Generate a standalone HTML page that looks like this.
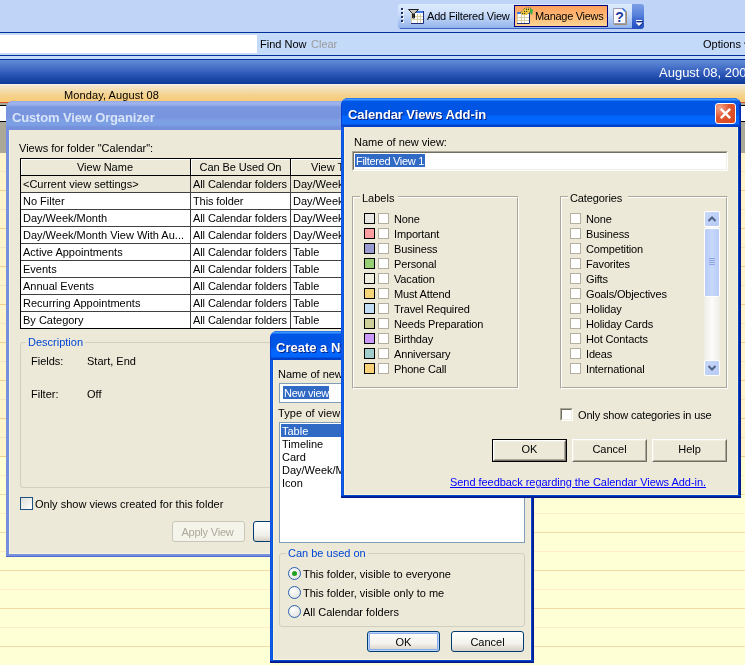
<!DOCTYPE html>
<html><head><meta charset="utf-8">
<style>
*{margin:0;padding:0;box-sizing:border-box}
html,body{width:745px;height:665px;overflow:hidden;background:#C3DAF9;font-family:"Liberation Sans",sans-serif;font-size:11px;color:#000}
.a{position:absolute}
.t{position:absolute;white-space:nowrap;line-height:13px;font-size:11px;will-change:transform}
</style></head><body>
<!-- ===== Outlook background ===== -->
<div class="a" style="left:0;top:0;width:745px;height:32px;background:#C0D4F8"></div>
<div class="a" style="left:0;top:32px;width:745px;height:1px;background:#002D96"></div>
<div class="a" style="left:0;top:35px;width:257px;height:18px;background:#fff"></div>
<div class="t" style="left:260px;top:38px">Find Now</div>
<div class="t" style="left:311px;top:38px;color:#9A9A9A">Clear</div>
<div class="t" style="left:703px;top:38px">Options ▾</div>
<div class="a" style="left:0;top:55px;width:745px;height:1px;background:#002D96"></div>
<div class="a" style="left:0;top:59px;width:745px;height:1px;background:#002D96"></div>
<div class="a" style="left:0;top:60px;width:745px;height:24px;background:linear-gradient(#638DD9,#2B56B7 60%,#0B3997)"></div>
<div class="t" style="left:659px;top:65px;font-size:13px;line-height:15px;color:#fff">August 08, 2005</div>
<div class="a" style="left:0;top:84px;width:745px;height:1px;background:#F4F1EA"></div>
<div class="a" style="left:0;top:85px;width:745px;height:17px;background:linear-gradient(#F1E8D2,#F5D28C 60%,#F8C977)"></div>
<div class="t" style="left:64px;top:89px;letter-spacing:0.1px">Monday, August 08</div>
<div class="a" style="left:0;top:102px;width:745px;height:1px;background:#DB5530"></div>
<div class="a" style="left:0;top:103px;width:745px;height:2px;background:#A9A998"></div>
<div class="a" style="left:0;top:105px;width:745px;height:17px;background:#fff;border-top:1px solid #000;border-bottom:1px solid #000"></div>
<div class="a" style="left:0;top:122px;width:745px;height:31px;background:#ABA897"></div>
<div class="a" id="cal" style="left:0;top:153px;width:745px;height:512px;background:#FFF4CC"></div>
<div class="a" style="left:0;top:457px;width:745px;height:208px;background:#FFFFD5"></div>
<div class="a" style="left:0;top:171px;width:745px;height:1px;background:#EFE5C6"></div>
<div class="a" style="left:0;top:190px;width:745px;height:1px;background:#F1D08E"></div>
<div class="a" style="left:0;top:209px;width:745px;height:1px;background:#EFE5C6"></div>
<div class="a" style="left:0;top:228px;width:745px;height:1px;background:#F1D08E"></div>
<div class="a" style="left:0;top:247px;width:745px;height:1px;background:#EFE5C6"></div>
<div class="a" style="left:0;top:266px;width:745px;height:1px;background:#F1D08E"></div>
<div class="a" style="left:0;top:285px;width:745px;height:1px;background:#EFE5C6"></div>
<div class="a" style="left:0;top:304px;width:745px;height:1px;background:#F1D08E"></div>
<div class="a" style="left:0;top:323px;width:745px;height:1px;background:#EFE5C6"></div>
<div class="a" style="left:0;top:342px;width:745px;height:1px;background:#F1D08E"></div>
<div class="a" style="left:0;top:361px;width:745px;height:1px;background:#EFE5C6"></div>
<div class="a" style="left:0;top:380px;width:745px;height:1px;background:#F1D08E"></div>
<div class="a" style="left:0;top:399px;width:745px;height:1px;background:#EFE5C6"></div>
<div class="a" style="left:0;top:418px;width:745px;height:1px;background:#F1D08E"></div>
<div class="a" style="left:0;top:437px;width:745px;height:1px;background:#EFE5C6"></div>
<div class="a" style="left:0;top:456px;width:745px;height:1px;background:#F1D08E"></div>
<div class="a" style="left:0;top:475px;width:745px;height:1px;background:#FFEDC5"></div>
<div class="a" style="left:0;top:494px;width:745px;height:1px;background:#F3DBA5"></div>
<div class="a" style="left:0;top:513px;width:745px;height:1px;background:#FFEDC5"></div>
<div class="a" style="left:0;top:532px;width:745px;height:1px;background:#F3DBA5"></div>
<div class="a" style="left:0;top:551px;width:745px;height:1px;background:#FFEDC5"></div>
<div class="a" style="left:0;top:570px;width:745px;height:1px;background:#F3DBA5"></div>
<div class="a" style="left:0;top:589px;width:745px;height:1px;background:#FFEDC5"></div>
<div class="a" style="left:0;top:608px;width:745px;height:1px;background:#F3DBA5"></div>
<div class="a" style="left:0;top:627px;width:745px;height:1px;background:#FFEDC5"></div>
<div class="a" style="left:0;top:646px;width:745px;height:1px;background:#F3DBA5"></div>

<!-- toolbar -->
<div class="a" style="left:398px;top:4px;width:240px;height:25px;border-radius:3px 0 0 3px;background:linear-gradient(#DDEBFD 0px,#D3E4FC 6px,#C2D7F8 12px,#AEC8F2 17px,#9BBAEE 22px,#8FB0EA 24px)"></div>
<div class="a" style="left:400px;top:28px;width:238px;height:1px;background:#3B64C0"></div>
<div class="a" style="left:402px;top:9px;width:2px;height:2px;background:#fff"></div>
<div class="a" style="left:401px;top:8px;width:2px;height:2px;background:#1B2C66"></div>
<div class="a" style="left:402px;top:13px;width:2px;height:2px;background:#fff"></div>
<div class="a" style="left:401px;top:12px;width:2px;height:2px;background:#1B2C66"></div>
<div class="a" style="left:402px;top:17px;width:2px;height:2px;background:#fff"></div>
<div class="a" style="left:401px;top:16px;width:2px;height:2px;background:#1B2C66"></div>
<div class="a" style="left:402px;top:21px;width:2px;height:2px;background:#fff"></div>
<div class="a" style="left:401px;top:20px;width:2px;height:2px;background:#1B2C66"></div>
<svg class="a" style="left:406px;top:6px" width="20" height="20">
<rect x="5" y="5" width="13" height="12" fill="#FFFFFF"/>
<path d="M11.5 8V17M14.5 8V17M5 10.5H17M5 13.5H17" stroke="#D8CFA8" stroke-width="1"/>
<path d="M5.5 5V17" stroke="#D8CFA8" stroke-width="1"/>
<rect x="9" y="5" width="9" height="2" fill="#3C78E8"/>
<path d="M17.5 5V17.5H5" stroke="#1F2A78" stroke-width="1" fill="none"/>
<path d="M2.5 3.5 L12.5 3.5 L8.5 7.5 L8.5 12 L6.5 12 L6.5 7.5 Z" fill="#C8C8C0" stroke="#202020" stroke-width="1"/>
<path d="M7.5 7.5V11.5" stroke="#303030" stroke-width="1.2"/>
</svg>
<div class="t" style="left:427px;top:10px;letter-spacing:-0.2px">Add Filtered View</div>
<div class="a" style="left:514px;top:5px;width:94px;height:22px;border:1px solid #000080;background:linear-gradient(#FFA15D,#FFB874 50%,#FFD592)"></div>
<svg class="a" style="left:515px;top:6px" width="20" height="20">
<rect x="2" y="6" width="13" height="12" fill="#FFFFFF"/>
<path d="M6.5 8V17M9.5 8V17M2 11.5H14M2 14.5H14M2.5 6V17" stroke="#D8CFA8" stroke-width="1"/>
<rect x="2" y="6" width="13" height="2" fill="#3C78E8"/>
<path d="M14.5 6V17.5H2" stroke="#1F2A78" stroke-width="1" fill="none"/>
<path d="M5 7 L10 2 L16 2 L16 5 L12 9 L8 9 Z" fill="#E8C040"/>
<path d="M5 7 L10 2 L16 2" stroke="#505040" stroke-width="1" stroke-dasharray="1 1" fill="none"/>
<path d="M7 7.5H10M9 5.5H12M11 3.5H14" stroke="#404030" stroke-width="1" stroke-dasharray="1 1"/>
<path d="M15 2 L18 4 L17 9 L15 7 Z" fill="#3CB043"/>
</svg>
<div class="t" style="left:535px;top:10px;letter-spacing:-0.3px">Manage Views</div>
<svg class="a" style="left:612px;top:7px" width="16" height="19">
<path d="M1.5 1.5 H11 L13.5 4 V16.5 H1.5 Z" fill="#FAFAFF" stroke="#9C9CB0" stroke-width="1"/>
<path d="M2 17.5H14.5V4.5" stroke="#A08C70" stroke-width="1" fill="none"/>
<path d="M10.5 1.5 L13.5 4.5" stroke="#3070E0" stroke-width="1.5"/>
<text x="7.5" y="14.5" font-family="Liberation Sans" font-weight="bold" font-size="14" fill="#1C3A9C" text-anchor="middle">?</text>
</svg>
<div class="a" style="left:632px;top:4px;width:12px;height:25px;border-radius:0 3px 3px 0;background:linear-gradient(#7C9FE6,#5A84DC 40%,#2D5ACA 80%,#2450C0)"></div>
<div class="a" style="left:636px;top:20px;width:6px;height:1px;background:#fff"></div>
<div class="a" style="left:637px;top:21px;width:6px;height:1px;background:#1A2A70"></div>
<svg class="a" style="left:635px;top:22px" width="9" height="5"><path d="M0.5 0.5 L7.5 0.5 L4 4 Z" fill="#fff"/><path d="M4.5 4.5 L8 1" stroke="#1A2A70" stroke-width="1"/></svg>

<!-- ===== Dialog 1: Custom View Organizer ===== -->
<div class="a" style="left:6px;top:101px;width:514px;height:456px;background:#7590DC;border-radius:7px 7px 0 0"></div>
<div class="a" style="left:6px;top:101px;width:514px;height:29px;border-radius:7px 7px 0 0;background:linear-gradient(#8EA7E6 0px,#A0B6EC 2px,#95ACE8 4px,#7A96DF 6px,#7994DE 17px,#7DA0E5 19px,#7CA0E4 24px,#7790DC 26px,#7590DC 29px)"></div>
<div class="a" style="left:9px;top:130px;width:508px;height:424px;background:#ECE9D8;border-left:1px solid #F8F3E0;border-bottom:1px solid #F8F3E0"></div>
<div class="a" style="left:6px;top:556px;width:514px;height:1px;background:#5468CF"></div>
<div class="t" style="left:12px;top:110px;font-size:13px;line-height:15px;font-weight:bold;color:#D8E4F8;letter-spacing:-0.15px">Custom View Organizer</div>
<div class="t" style="left:19px;top:142px">Views for folder "Calendar":</div>
<div class="a" style="left:20px;top:158px;width:400px;height:171px;background:#fff;border:1px solid #000"></div>
<div class="a" style="left:21px;top:159px;width:398px;height:16px;background:#ECE9D8;border-top:1px solid #fff;border-left:1px solid #fff"></div>
<div class="a" style="left:20px;top:175px;width:400px;height:1px;background:#000"></div>
<div class="a" style="left:21px;top:176px;width:398px;height:16px;background:#ECE9D8"></div>
<div class="a" style="left:21px;top:192px;width:398px;height:1px;background:#404040"></div>
<div class="a" style="left:21px;top:209px;width:398px;height:1px;background:#404040"></div>
<div class="a" style="left:21px;top:226px;width:398px;height:1px;background:#404040"></div>
<div class="a" style="left:21px;top:243px;width:398px;height:1px;background:#404040"></div>
<div class="a" style="left:21px;top:260px;width:398px;height:1px;background:#404040"></div>
<div class="a" style="left:21px;top:277px;width:398px;height:1px;background:#404040"></div>
<div class="a" style="left:21px;top:294px;width:398px;height:1px;background:#404040"></div>
<div class="a" style="left:21px;top:311px;width:398px;height:1px;background:#404040"></div>
<div class="a" style="left:190px;top:159px;width:1px;height:17px;background:#000"></div>
<div class="a" style="left:191px;top:159px;width:1px;height:16px;background:#fff"></div>
<div class="a" style="left:290px;top:159px;width:1px;height:17px;background:#000"></div>
<div class="a" style="left:291px;top:159px;width:1px;height:16px;background:#fff"></div>
<div class="a" style="left:190px;top:176px;width:1px;height:152px;background:#404040"></div>
<div class="a" style="left:290px;top:176px;width:1px;height:152px;background:#404040"></div>
<div class="t" style="left:20px;top:161px;width:170px;text-align:center">View Name</div>
<div class="t" style="left:191px;top:161px;width:99px;text-align:center;letter-spacing:-0.1px">Can Be Used On</div>
<div class="t" style="left:311px;top:161px">View Type</div>
<div class="t" style="left:23px;top:178px;width:167px;overflow:hidden">&lt;Current view settings&gt;</div>
<div class="t" style="left:193px;top:178px;width:96px;overflow:hidden;letter-spacing:-0.1px">All Calendar folders</div>
<div class="t" style="left:293px;top:178px">Day/Week/Month</div>
<div class="t" style="left:23px;top:195px;width:167px;overflow:hidden">No Filter</div>
<div class="t" style="left:193px;top:195px;width:96px;overflow:hidden;letter-spacing:-0.1px">This folder</div>
<div class="t" style="left:293px;top:195px">Day/Week/Month</div>
<div class="t" style="left:23px;top:212px;width:167px;overflow:hidden">Day/Week/Month</div>
<div class="t" style="left:193px;top:212px;width:96px;overflow:hidden;letter-spacing:-0.1px">All Calendar folders</div>
<div class="t" style="left:293px;top:212px">Day/Week/Month</div>
<div class="t" style="left:23px;top:229px;width:167px;overflow:hidden">Day/Week/Month View With Au...</div>
<div class="t" style="left:193px;top:229px;width:96px;overflow:hidden;letter-spacing:-0.1px">All Calendar folders</div>
<div class="t" style="left:293px;top:229px">Day/Week/Month</div>
<div class="t" style="left:23px;top:246px;width:167px;overflow:hidden">Active Appointments</div>
<div class="t" style="left:193px;top:246px;width:96px;overflow:hidden;letter-spacing:-0.1px">All Calendar folders</div>
<div class="t" style="left:293px;top:246px">Table</div>
<div class="t" style="left:23px;top:263px;width:167px;overflow:hidden">Events</div>
<div class="t" style="left:193px;top:263px;width:96px;overflow:hidden;letter-spacing:-0.1px">All Calendar folders</div>
<div class="t" style="left:293px;top:263px">Table</div>
<div class="t" style="left:23px;top:280px;width:167px;overflow:hidden">Annual Events</div>
<div class="t" style="left:193px;top:280px;width:96px;overflow:hidden;letter-spacing:-0.1px">All Calendar folders</div>
<div class="t" style="left:293px;top:280px">Table</div>
<div class="t" style="left:23px;top:297px;width:167px;overflow:hidden">Recurring Appointments</div>
<div class="t" style="left:193px;top:297px;width:96px;overflow:hidden;letter-spacing:-0.1px">All Calendar folders</div>
<div class="t" style="left:293px;top:297px">Table</div>
<div class="t" style="left:23px;top:314px;width:167px;overflow:hidden">By Category</div>
<div class="t" style="left:193px;top:314px;width:96px;overflow:hidden;letter-spacing:-0.1px">All Calendar folders</div>
<div class="t" style="left:293px;top:314px">Table</div>
<div class="a" style="left:20px;top:342px;width:480px;height:146px;border:1px solid #D0D0BF;border-radius:3px"></div>
<div class="t" style="left:26px;top:336px;padding:0 2px;background:#ECE9D8;color:#0046D5">Description</div>
<div class="t" style="left:31px;top:355px">Fields:</div>
<div class="t" style="left:87px;top:355px">Start, End</div>
<div class="t" style="left:31px;top:388px">Filter:</div>
<div class="t" style="left:87px;top:388px">Off</div>
<div class="a" style="left:20px;top:497px;width:13px;height:13px;border:1px solid #1C5180;background:linear-gradient(135deg,#DCDCD7,#FFFFFF)"></div>
<div class="t" style="left:35px;top:498px">Only show views created for this folder</div>
<div class="a" style="left:172px;top:521px;width:73px;height:21px;border:1px solid #C9C7BA;border-radius:3px;background:#F5F4EA"></div>
<div class="t" style="left:171px;top:526px;width:73px;text-align:center;color:#ACA899;letter-spacing:-0.2px">Apply View</div>
<div class="a" style="left:253px;top:521px;width:73px;height:21px;border:1px solid #003C74;border-radius:3px;background:linear-gradient(#FFFFFF,#F0F0EA 70%,#D6D0C5)"></div>

<!-- ===== Dialog 2: Create a New View ===== -->
<div class="a" style="left:270px;top:331px;width:264px;height:332px;background:linear-gradient(90deg,#0831D9 0px,#166AEE 1px,#0855DD 2px,#0855DD 261px,#0033B8 262px,#001B8E 263px);border-radius:7px 7px 0 0"></div>
<div class="a" style="left:270px;top:660px;width:264px;height:3px;background:linear-gradient(#0A5CF0 0px,#0033B0 1px,#001B8E 2px)"></div>
<div class="a" style="left:270px;top:331px;width:264px;height:29px;border-radius:7px 7px 0 0;background:linear-gradient(#0A5BE8 0px,#3D95FF 1px,#3D95FF 2px,#0058E6 3px,#0055E5 5px,#0055E5 17px,#0066FF 18px,#0066FF 26px,#0040C8 27px,#0040C8 29px)"></div>
<div class="a" style="left:270px;top:337px;width:1px;height:23px;background:#0A40D0"></div>
<div class="a" style="left:532px;top:337px;width:2px;height:23px;background:linear-gradient(90deg,#0840C8,#0028A8)"></div>
<div class="a" style="left:273px;top:360px;width:258px;height:300px;background:#ECE9D8;border:1px solid #FDF4D6;border-top:none"></div>
<div class="t" style="left:276px;top:340px;font-size:13px;line-height:15px;font-weight:bold;color:#fff;text-shadow:1px 1px 0 #0A1E78">Create a New View</div>
<div class="t" style="left:278px;top:368px">Name of new view:</div>
<div class="a" style="left:279px;top:383px;width:246px;height:20px;border:1px solid #7F9DB9;background:#fff"></div>
<div class="t" style="left:283px;top:386px;height:13px;padding:1px 0 0 1px;line-height:13px;background:#316AC5;color:#fff;letter-spacing:-0.25px;width:46px;overflow:hidden">New view</div>
<div class="t" style="left:278px;top:407px;letter-spacing:0.1px">Type of view:</div>
<div class="a" style="left:279px;top:422px;width:246px;height:121px;border:1px solid #7F9DB9;background:#fff"></div>
<div class="a" style="left:281px;top:424px;width:242px;height:13px;background:#316AC5"></div>
<div class="t" style="left:282px;top:425px;color:#fff">Table</div>
<div class="t" style="left:282px;top:438px;color:#000">Timeline</div>
<div class="t" style="left:282px;top:451px;color:#000">Card</div>
<div class="t" style="left:282px;top:464px;color:#000">Day/Week/Month</div>
<div class="t" style="left:282px;top:477px;color:#000">Icon</div>
<div class="a" style="left:279px;top:553px;width:246px;height:74px;border:1px solid #D0D0BF;border-radius:3px"></div>
<div class="t" style="left:286px;top:547px;padding:0 2px;background:#ECE9D8;color:#0046D5">Can be used on</div>
<div class="a" style="left:288px;top:567px;width:13px;height:13px;border-radius:50%;border:1px solid #2A62B0;background:radial-gradient(circle at 35% 35%,#fff,#DCDCD7)"></div>
<div class="a" style="left:292px;top:571px;width:5px;height:5px;border-radius:50%;background:#21A121"></div>
<div class="t" style="left:303px;top:568px">This folder, visible to everyone</div>
<div class="a" style="left:288px;top:586px;width:13px;height:13px;border-radius:50%;border:1px solid #2A62B0;background:radial-gradient(circle at 35% 35%,#fff,#DCDCD7)"></div>
<div class="t" style="left:303px;top:587px">This folder, visible only to me</div>
<div class="a" style="left:288px;top:605px;width:13px;height:13px;border-radius:50%;border:1px solid #2A62B0;background:radial-gradient(circle at 35% 35%,#fff,#DCDCD7)"></div>
<div class="t" style="left:303px;top:606px">All Calendar folders</div>
<div class="a" style="left:367px;top:631px;width:73px;height:21px;border:1px solid #003C74;border-radius:3px;background:linear-gradient(#FFFFFF,#F3F2EC 60%,#D6D0C5);box-shadow:inset 0 0 0 1px #B8D4FA,inset 0 0 0 2px #8AAEEC"></div>
<div class="t" style="left:367px;top:636px;width:73px;text-align:center">OK</div>
<div class="a" style="left:451px;top:631px;width:73px;height:21px;border:1px solid #003C74;border-radius:3px;background:linear-gradient(#FFFFFF,#F3F2EC 60%,#D6D0C5);"></div>
<div class="t" style="left:451px;top:636px;width:73px;text-align:center">Cancel</div>

<!-- ===== Dialog 3: Calendar Views Add-in ===== -->
<div class="a" style="left:341px;top:98px;width:400px;height:400px;background:linear-gradient(90deg,#0831D9 0px,#166AEE 1px,#0855DD 2px,#0855DD 397px,#0033B8 398px,#001B8E 399px);border-radius:7px 7px 0 0"></div>
<div class="a" style="left:341px;top:495px;width:400px;height:3px;background:linear-gradient(#0A5CF0 0px,#0033B0 1px,#001B8E 2px)"></div>
<div class="a" style="left:341px;top:98px;width:400px;height:29px;border-radius:7px 7px 0 0;background:linear-gradient(#0A5BE8 0px,#3D95FF 1px,#3D95FF 2px,#0058E6 3px,#0055E5 5px,#0055E5 17px,#0066FF 18px,#0066FF 26px,#0040C8 27px,#0040C8 29px)"></div>
<div class="a" style="left:341px;top:104px;width:1px;height:23px;background:#0A40D0"></div>
<div class="a" style="left:739px;top:104px;width:2px;height:23px;background:linear-gradient(90deg,#0840C8,#0028A8)"></div>
<div class="a" style="left:344px;top:127px;width:394px;height:368px;background:#ECE9D8;border:1px solid #FDF4D6;border-top:none"></div>
<div class="t" style="left:348px;top:107px;font-size:13px;line-height:15px;font-weight:bold;color:#fff;text-shadow:1px 1px 0 #0A1E78;letter-spacing:-0.1px">Calendar Views Add-in</div>
<div class="a" style="left:715px;top:103px;width:21px;height:21px;border:1px solid #fff;border-radius:3px;background:radial-gradient(circle at 20% 20%,#F5A58A,#E0552E 45%,#D8461E)"></div>
<svg class="a" style="left:715px;top:103px" width="21" height="21"><path d="M5.8 5.8 L15.2 15.2 M15.2 5.8 L5.8 15.2" stroke="#fff" stroke-width="2.4"/></svg>
<div class="t" style="left:354px;top:136px">Name of new view:</div>
<div class="a" style="left:352px;top:151px;width:376px;height:20px;background:#fff;border-top:1px solid #ACA899;border-left:1px solid #ACA899;border-right:1px solid #fff;border-bottom:1px solid #fff"></div>
<div class="a" style="left:353px;top:152px;width:374px;height:18px;border-top:1px solid #716F64;border-left:1px solid #716F64;border-right:1px solid #F1EFE2;border-bottom:1px solid #F1EFE2"></div>
<div class="t" style="left:355px;top:154px;height:13px;padding:1px 0 0 1px;line-height:13px;background:#316AC5;color:#fff;letter-spacing:-0.3px;width:70px;overflow:hidden">Filtered View 1</div>
<div class="a" style="left:352px;top:196px;width:167px;height:193px;border:1px solid #ACA899;border-right-color:#fff;border-bottom-color:#fff"></div>
<div class="a" style="left:353px;top:197px;width:165px;height:191px;border:1px solid #fff;border-right-color:#ACA899;border-bottom-color:#ACA899"></div>
<div class="t" style="left:360px;top:192px;padding:0 4px 0 2px;background:#ECE9D8">Labels</div>
<div class="a" style="left:560px;top:196px;width:168px;height:193px;border:1px solid #ACA899;border-right-color:#fff;border-bottom-color:#fff"></div>
<div class="a" style="left:561px;top:197px;width:166px;height:191px;border:1px solid #fff;border-right-color:#ACA899;border-bottom-color:#ACA899"></div>
<div class="t" style="left:568px;top:192px;padding:0 6px 0 2px;background:#ECE9D8;letter-spacing:-0.1px">Categories</div>
<div class="a" style="left:364px;top:213px;width:11px;height:11px;border:1px solid #000;background:#EAE8E2"></div>
<div class="a" style="left:378px;top:213px;width:11px;height:11px;border:1px solid #B4AE9E;background:#fff"></div>
<div class="t" style="left:394px;top:213px;letter-spacing:-0.15px">None</div>
<div class="a" style="left:364px;top:228px;width:11px;height:11px;border:1px solid #000;background:#FF9E9E"></div>
<div class="a" style="left:378px;top:228px;width:11px;height:11px;border:1px solid #B4AE9E;background:#fff"></div>
<div class="t" style="left:394px;top:228px;letter-spacing:-0.15px">Important</div>
<div class="a" style="left:364px;top:243px;width:11px;height:11px;border:1px solid #000;background:#9B9BD3"></div>
<div class="a" style="left:378px;top:243px;width:11px;height:11px;border:1px solid #B4AE9E;background:#fff"></div>
<div class="t" style="left:394px;top:243px;letter-spacing:-0.15px">Business</div>
<div class="a" style="left:364px;top:258px;width:11px;height:11px;border:1px solid #000;background:#98CE73"></div>
<div class="a" style="left:378px;top:258px;width:11px;height:11px;border:1px solid #B4AE9E;background:#fff"></div>
<div class="t" style="left:394px;top:258px;letter-spacing:-0.15px">Personal</div>
<div class="a" style="left:364px;top:273px;width:11px;height:11px;border:1px solid #000;background:#F0EEDC"></div>
<div class="a" style="left:378px;top:273px;width:11px;height:11px;border:1px solid #B4AE9E;background:#fff"></div>
<div class="t" style="left:394px;top:273px;letter-spacing:-0.15px">Vacation</div>
<div class="a" style="left:364px;top:288px;width:11px;height:11px;border:1px solid #000;background:#F5D47A"></div>
<div class="a" style="left:378px;top:288px;width:11px;height:11px;border:1px solid #B4AE9E;background:#fff"></div>
<div class="t" style="left:394px;top:288px;letter-spacing:-0.15px">Must Attend</div>
<div class="a" style="left:364px;top:303px;width:11px;height:11px;border:1px solid #000;background:#C2DEF5"></div>
<div class="a" style="left:378px;top:303px;width:11px;height:11px;border:1px solid #B4AE9E;background:#fff"></div>
<div class="t" style="left:394px;top:303px;letter-spacing:-0.15px">Travel Required</div>
<div class="a" style="left:364px;top:318px;width:11px;height:11px;border:1px solid #000;background:#CFCF9C"></div>
<div class="a" style="left:378px;top:318px;width:11px;height:11px;border:1px solid #B4AE9E;background:#fff"></div>
<div class="t" style="left:394px;top:318px;letter-spacing:-0.15px">Needs Preparation</div>
<div class="a" style="left:364px;top:333px;width:11px;height:11px;border:1px solid #000;background:#CC99FF"></div>
<div class="a" style="left:378px;top:333px;width:11px;height:11px;border:1px solid #B4AE9E;background:#fff"></div>
<div class="t" style="left:394px;top:333px;letter-spacing:-0.15px">Birthday</div>
<div class="a" style="left:364px;top:348px;width:11px;height:11px;border:1px solid #000;background:#A3CCCC"></div>
<div class="a" style="left:378px;top:348px;width:11px;height:11px;border:1px solid #B4AE9E;background:#fff"></div>
<div class="t" style="left:394px;top:348px;letter-spacing:-0.15px">Anniversary</div>
<div class="a" style="left:364px;top:363px;width:11px;height:11px;border:1px solid #000;background:#FAD27A"></div>
<div class="a" style="left:378px;top:363px;width:11px;height:11px;border:1px solid #B4AE9E;background:#fff"></div>
<div class="t" style="left:394px;top:363px;letter-spacing:-0.15px">Phone Call</div>
<div class="a" style="left:570px;top:213px;width:11px;height:11px;border:1px solid #B4AE9E;background:#fff"></div>
<div class="t" style="left:586px;top:213px;letter-spacing:-0.15px">None</div>
<div class="a" style="left:570px;top:228px;width:11px;height:11px;border:1px solid #B4AE9E;background:#fff"></div>
<div class="t" style="left:586px;top:228px;letter-spacing:-0.15px">Business</div>
<div class="a" style="left:570px;top:243px;width:11px;height:11px;border:1px solid #B4AE9E;background:#fff"></div>
<div class="t" style="left:586px;top:243px;letter-spacing:-0.15px">Competition</div>
<div class="a" style="left:570px;top:258px;width:11px;height:11px;border:1px solid #B4AE9E;background:#fff"></div>
<div class="t" style="left:586px;top:258px;letter-spacing:-0.15px">Favorites</div>
<div class="a" style="left:570px;top:273px;width:11px;height:11px;border:1px solid #B4AE9E;background:#fff"></div>
<div class="t" style="left:586px;top:273px;letter-spacing:-0.15px">Gifts</div>
<div class="a" style="left:570px;top:288px;width:11px;height:11px;border:1px solid #B4AE9E;background:#fff"></div>
<div class="t" style="left:586px;top:288px;letter-spacing:-0.15px">Goals/Objectives</div>
<div class="a" style="left:570px;top:303px;width:11px;height:11px;border:1px solid #B4AE9E;background:#fff"></div>
<div class="t" style="left:586px;top:303px;letter-spacing:-0.15px">Holiday</div>
<div class="a" style="left:570px;top:318px;width:11px;height:11px;border:1px solid #B4AE9E;background:#fff"></div>
<div class="t" style="left:586px;top:318px;letter-spacing:-0.15px">Holiday Cards</div>
<div class="a" style="left:570px;top:333px;width:11px;height:11px;border:1px solid #B4AE9E;background:#fff"></div>
<div class="t" style="left:586px;top:333px;letter-spacing:-0.15px">Hot Contacts</div>
<div class="a" style="left:570px;top:348px;width:11px;height:11px;border:1px solid #B4AE9E;background:#fff"></div>
<div class="t" style="left:586px;top:348px;letter-spacing:-0.15px">Ideas</div>
<div class="a" style="left:570px;top:363px;width:11px;height:11px;border:1px solid #B4AE9E;background:#fff"></div>
<div class="t" style="left:586px;top:363px;letter-spacing:-0.15px">International</div>
<div class="a" style="left:704px;top:211px;width:16px;height:165px;background:linear-gradient(90deg,#EEEDE5,#FDFDFA 50%,#EEEDE5)"></div>
<div class="a" style="left:704px;top:211px;width:16px;height:16px;border:1px solid #fff;border-radius:2px;background:linear-gradient(135deg,#C8D8FA,#B6CAF6)"></div>
<svg class="a" style="left:704px;top:211px" width="16" height="16"><path d="M4.5 10 L8 6.5 L11.5 10" stroke="#4D6185" stroke-width="2" fill="none"/></svg>
<div class="a" style="left:704px;top:228px;width:16px;height:69px;border:1px solid #fff;border-radius:2px;background:linear-gradient(90deg,#B8CCF7,#C8D8FB 50%,#B8CCF7)"></div>
<svg class="a" style="left:704px;top:228px" width="16" height="69"><path d="M5 30.5H11M5 32.5H11M5 34.5H11M5 36.5H11" stroke="#8CA6E0" stroke-width="1"/></svg>
<div class="a" style="left:704px;top:360px;width:16px;height:16px;border:1px solid #fff;border-radius:2px;background:linear-gradient(135deg,#C8D8FA,#B6CAF6)"></div>
<svg class="a" style="left:704px;top:360px" width="16" height="16"><path d="M4.5 6 L8 9.5 L11.5 6" stroke="#4D6185" stroke-width="2" fill="none"/></svg>
<div class="a" style="left:560px;top:408px;width:13px;height:13px;background:#fff;border-top:1px solid #ACA899;border-left:1px solid #ACA899;border-right:1px solid #fff;border-bottom:1px solid #fff"></div>
<div class="a" style="left:561px;top:409px;width:11px;height:11px;border-top:1px solid #716F64;border-left:1px solid #716F64;border-right:1px solid #F1EFE2;border-bottom:1px solid #F1EFE2"></div>
<div class="t" style="left:578px;top:409px;letter-spacing:-0.15px">Only show categories in use</div>
<div class="a" style="left:492px;top:439px;width:75px;height:23px;border:1px solid #000"></div>
<div class="a" style="left:493px;top:440px;width:73px;height:21px;background:#ECE9D8;border-top:1px solid #fff;border-left:1px solid #fff;border-right:1px solid #716F64;border-bottom:1px solid #716F64"></div>
<div class="a" style="left:494px;top:441px;width:71px;height:19px;border-top:1px solid #F1EFE2;border-left:1px solid #F1EFE2;border-right:1px solid #ACA899;border-bottom:1px solid #ACA899"></div>
<div class="a" style="left:572px;top:439px;width:75px;height:23px;background:#ECE9D8;border-top:1px solid #fff;border-left:1px solid #fff;border-right:1px solid #716F64;border-bottom:1px solid #716F64"></div>
<div class="a" style="left:573px;top:440px;width:73px;height:21px;border-top:1px solid #F1EFE2;border-left:1px solid #F1EFE2;border-right:1px solid #ACA899;border-bottom:1px solid #ACA899"></div>
<div class="a" style="left:652px;top:439px;width:75px;height:23px;background:#ECE9D8;border-top:1px solid #fff;border-left:1px solid #fff;border-right:1px solid #716F64;border-bottom:1px solid #716F64"></div>
<div class="a" style="left:653px;top:440px;width:73px;height:21px;border-top:1px solid #F1EFE2;border-left:1px solid #F1EFE2;border-right:1px solid #ACA899;border-bottom:1px solid #ACA899"></div>
<div class="t" style="left:492px;top:443px;width:75px;text-align:center">OK</div>
<div class="t" style="left:572px;top:443px;width:75px;text-align:center">Cancel</div>
<div class="t" style="left:652px;top:443px;width:75px;text-align:center">Help</div>
<div class="t" style="left:450px;top:476px;color:#0000FF;text-decoration:underline;letter-spacing:-0.05px">Send feedback regarding the Calendar Views Add-in.</div>
</body></html>
